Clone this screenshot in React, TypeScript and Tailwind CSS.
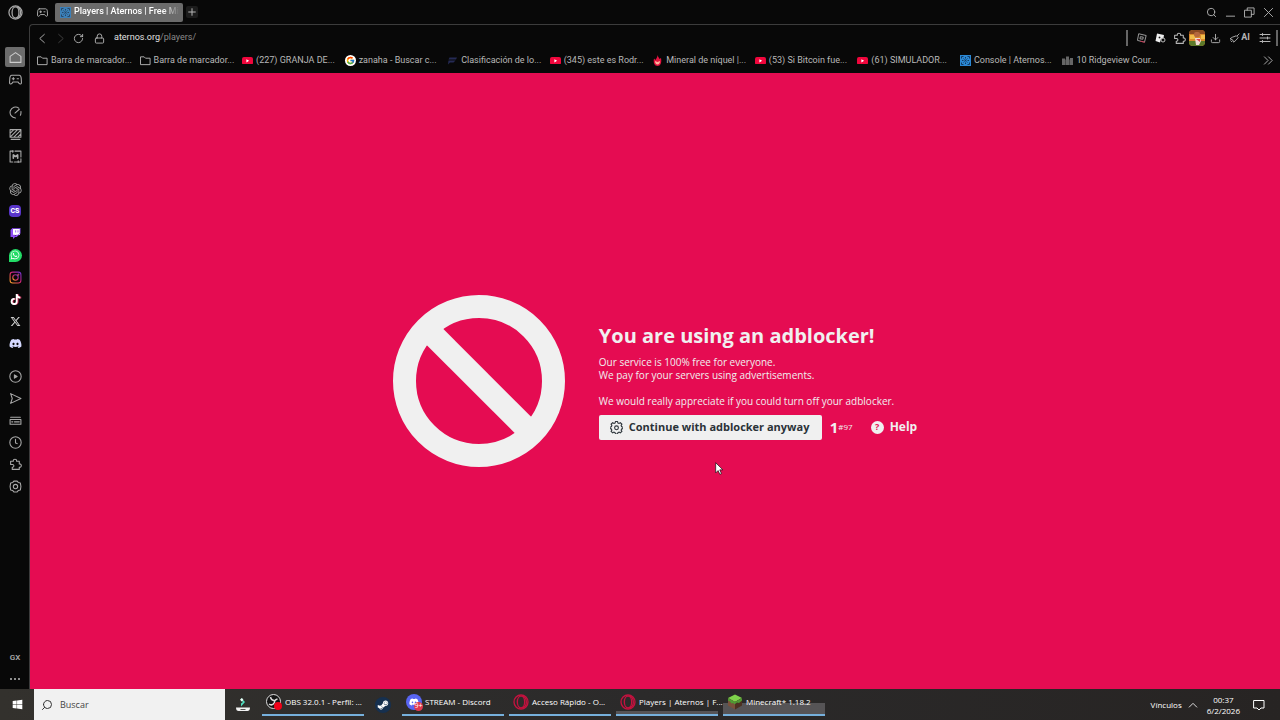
import type { ReactNode } from 'react'
import { Download, Lock, RotateCw, Search } from 'lucide-react'
import { FaDiscord, FaSteamSymbol, FaTiktok, FaTwitch, FaWhatsapp, FaWindows, FaXTwitter } from 'react-icons/fa6'
import { FcGoogle } from 'react-icons/fc'
import { RiOpenaiFill } from 'react-icons/ri'

interface IconProps {
  className?: string
  children: ReactNode
}

// Thin outlined 24x24 icon
function Line({ className = 'size-[13px]', children }: IconProps) {
  return (
    <svg
      viewBox="0 0 24 24"
      className={className}
      fill="none"
      stroke="currentColor"
      strokeWidth="2"
      strokeLinecap="round"
      strokeLinejoin="round"
      aria-hidden="true"
    >
      {children}
    </svg>
  )
}

function OperaIcon({ className }: { className?: string }) {
  return (
    <Line className={className}>
      <circle cx="12" cy="12" r="10.5" />
      <ellipse cx="12" cy="12" rx="5.5" ry="8.8" />
      <path d="M15 3.5c3 1 5 4.500 5 8.500s-2 7.500-5 8.500" />
    </Line>
  )
}

function GamepadIcon({ className }: { className?: string }) {
  return (
    <Line className={className}>
      <path d="M5 4h14c2 0 3 2 3.500 5l.5 9c0 2.500-3 3-4.500 1L16.500 16.500h-9L5.500 19C4 21 1 20.500 1 18l.5-9C2 6 3 4 5 4z" />
      <path d="M6 10.500h4M8 8.500v4M15 10.500h2.500" />
    </Line>
  )
}

function PuzzleIcon() {
  return (
    <Line>
      <path d="M3 6h5c-1-5 7-5 6 0h5v5c5-1 5 7 0 6v4H6v-4c4 1 4-6 0-5H3z" />
    </Line>
  )
}

function YoutubeIcon() {
  return (
    <svg viewBox="0 0 20 14" className="w-[11px] shrink-0" aria-hidden="true">
      <rect width="20" height="14" rx="3.5" fill="#f0063c" />
      <path d="M8 4v6l5-3z" fill="#fff" />
    </svg>
  )
}

function FolderIcon() {
  return (
    <Line className="size-[11px] shrink-0">
      <path d="M2 4h7l3 3h10v14H2z" />
    </Line>
  )
}

function AternosIcon({ className }: { className?: string }) {
  return (
    <svg viewBox="0 0 22 22" className={className} aria-hidden="true">
      <rect width="22" height="22" fill="#2b87d3" />
      <path
        d="M3 7V3h4M15 3h4v4M19 15v4h-4M7 19H3v-4M7 7l2 2M15 7l-2 2M7 15l2-2M15 15l-2-2M11 4v3M11 15v3M4 11h3M15 11h3"
        stroke="#123a63"
        strokeWidth="2"
        fill="none"
      />
      <rect x="9.500" y="9.500" width="3" height="3" fill="#123a63" />
    </svg>
  )
}

const bookmarks: { label: string; icon: ReactNode }[] = [
  { label: 'Barra de marcador...', icon: <FolderIcon /> },
  { label: 'Barra de marcador...', icon: <FolderIcon /> },
  { label: '(227) GRANJA DE...', icon: <YoutubeIcon /> },
  {
    label: 'zanaha - Buscar c...',
    icon: (
      <span className="flex size-[11px] shrink-0 items-center justify-center rounded-full bg-white">
        <FcGoogle className="size-[9px]" />
      </span>
    ),
  },
  {
    label: 'Clasificación de lo...',
    icon: (
      <svg viewBox="0 0 22 22" className="size-[11px] shrink-0" aria-hidden="true">
        <path d="M5 5h15l-2 4H3zM3 11h14l-4 4H6l-4 4z" fill="#252a55" />
      </svg>
    ),
  },
  { label: '(345) este es Rodr...', icon: <YoutubeIcon /> },
  {
    label: 'Mineral de níquel |...',
    icon: (
      <svg viewBox="0 0 22 22" className="size-[11px] shrink-0" aria-hidden="true">
        <path d="M11 0c1 4 3 5 4 8l3-2c2 9-1 16-7 16S2 15 4 7l3 3c1-3 4-5 4-10z" fill="#e3123f" />
        <path d="M6 12l5 2 5-2c0 4-2 7-5 7s-5-3-5-7z" fill="#ffb199" />
      </svg>
    ),
  },
  { label: '(53) Si Bitcoin fue...', icon: <YoutubeIcon /> },
  { label: '(61) SIMULADOR...', icon: <YoutubeIcon /> },
  { label: 'Console | Aternos...', icon: <AternosIcon className="size-[11px] shrink-0" /> },
  {
    label: '10 Ridgeview Cour...',
    icon: (
      <svg viewBox="0 0 22 18" className="w-[11px] shrink-0" aria-hidden="true">
        <path d="M0 5h6v13H0zM8 1h6v17H8zM16 4h6v14h-6z" fill="#666" />
        <path d="M6 7h2v11H6zM14 7h2v11h-2z" fill="#444" />
      </svg>
    ),
  },
]

const sidebarGroups: { name: string; icon: ReactNode }[][] = [
  [
    {
      name: 'Speed Dial',
      icon: (
        <span className="flex size-5 items-center justify-center rounded-xs bg-[#6c6c6c] text-[#ccc]">
          <Line>
            <path d="M2 10l10-7 10 7v11H2z" />
          </Line>
        </span>
      ),
    },
    { name: 'GX Corner', icon: <GamepadIcon className="size-[13px]" /> },
  ],
  [
    {
      name: 'GX Control',
      icon: (
        <Line>
          <path d="M12 22A10 10 0 1 1 18 4M22 10c.3 3 0 5-1 7M11 13l8-7" />
        </Line>
      ),
    },
    {
      name: 'Hot Tabs Killer',
      icon: (
        <Line>
          <path d="M2 3h20v14H2zM4 21h16M2 10l7-7M3 16L15 4M9 17L21 5M16 17l6-6" />
        </Line>
      ),
    },
    {
      name: 'GX Mods',
      icon: (
        <Line>
          <path d="M8 2H2v20h5M10 22h12v-6M22 13V2H11M7 1v3M17 20v3" />
          <path d="M8 15V9l4 3 4-3v6" strokeWidth="3" />
        </Line>
      ),
    },
  ],
  [
    { name: 'ChatGPT', icon: <RiOpenaiFill className="size-[15px]" /> },
    {
      name: 'CS',
      icon: (
        <span className="flex size-3 items-center justify-center rounded-sm bg-[#5935c9] text-[7px] font-black text-white">CS</span>
      ),
    },
    {
      name: 'Twitch',
      icon: (
        <span className="flex size-[11px] bg-[linear-gradient(white,white)] bg-[length:7px_6px] bg-[position:3px_1px] bg-no-repeat">
          <FaTwitch className="size-[11px] text-[#8d4df5]" />
        </span>
      ),
    },
    {
      name: 'WhatsApp',
      icon: (
        <span className="flex size-[13px] items-center justify-center rounded-full rounded-bl-xs bg-[#22dc66]">
          <FaWhatsapp className="size-[10px] text-white" />
        </span>
      ),
    },
    {
      name: 'Instagram',
      icon: (
        <svg viewBox="0 0 24 24" className="size-[13px]" fill="none" stroke="url(#ig)" strokeWidth="2" aria-hidden="true">
          <defs>
            <linearGradient id="ig" x1="0" y1="1" x2="1" y2="0">
              <stop offset="0" stopColor="#f5a623" />
              <stop offset="0.5" stopColor="#d6246e" />
              <stop offset="1" stopColor="#6a30d0" />
            </linearGradient>
          </defs>
          <rect x="2" y="2" width="20" height="20" rx="5" />
          <circle cx="12" cy="12" r="5" />
          <circle cx="17.500" cy="6.500" r="0.7" />
        </svg>
      ),
    },
    { name: 'TikTok', icon: <FaTiktok className="size-[11px] text-white drop-shadow-[1px_0_0_#b01c45]" /> },
    { name: 'X', icon: <FaXTwitter className="size-[11px] text-[#d0d0d0]" /> },
    { name: 'Discord', icon: <FaDiscord className="size-[13px] text-[#d5d9ff]" /> },
  ],
  [
    {
      name: 'Player',
      icon: (
        <Line>
          <circle cx="12" cy="12" r="10.5" />
          <path d="M10 9v6l5-3z" fill="currentColor" />
        </Line>
      ),
    },
    {
      name: 'My Flow',
      icon: (
        <Line>
          <path d="M3 3l19 9-19 9 3-9z" />
        </Line>
      ),
    },
    {
      name: 'Pinboards',
      icon: (
        <Line>
          <path d="M3 6h18M2 10h20v9H2zM5 14.500h2M10 14.500h9" />
        </Line>
      ),
    },
    {
      name: 'History',
      icon: (
        <Line>
          <circle cx="12" cy="12" r="10.5" />
          <path d="M12 6v7l3 1" />
        </Line>
      ),
    },
    { name: 'Extensions', icon: <PuzzleIcon /> },
    {
      name: 'Settings',
      icon: (
        <Line>
          <path d="M9 2h6l2 2.500 4 1 1 6.500-1 6.500-4 1L15 22H9l-2-2.500-4-1L2 12l1-6.500 4-1z" />
          <circle cx="12" cy="12" r="4" />
        </Line>
      ),
    },
  ],
]

function Sidebar() {
  return (
    <nav aria-label="Sidebar" className="flex w-[29px] shrink-0 flex-col bg-[#080808] pl-px text-[#a8a8a8]">
      <button aria-label="Opera menu" className="mb-[22px] flex h-6 items-center justify-center">
        <OperaIcon className="size-[15px]" />
      </button>
      <div className="flex flex-col gap-[11px]">
        {sidebarGroups.map((group, index) => (
          <div key={index} className="flex flex-col">
            {group.map((item) => (
              <button key={item.name} aria-label={item.name} className="flex h-[22px] items-center justify-center">
                {item.icon}
              </button>
            ))}
          </div>
        ))}
      </div>
      <div className="mt-auto flex flex-col">
        <button className="h-[22px] text-[8px] font-semibold">GX</button>
        <button aria-label="More" className="flex h-5 items-center justify-center gap-[2px]">
          <span className="size-[2px] rounded-full bg-[#bbb]" />
          <span className="size-[2px] rounded-full bg-[#bbb]" />
          <span className="size-[2px] rounded-full bg-[#bbb]" />
        </button>
      </div>
    </nav>
  )
}

function TabBar() {
  return (
    <header className="flex h-6 shrink-0 items-center pr-[6px] pl-2 text-[#b5b5b5]">
      <button aria-label="GX Corner">
        <GamepadIcon className="size-[11px]" />
      </button>
      <button className="ml-[7px] flex h-[19px] w-32 items-center gap-[3px] rounded-xs bg-[#6b6b6b] px-[5px] font-medium text-white">
        <AternosIcon className="size-[11px] shrink-0 opacity-75" />
        <span className="mask-r-from-85% whitespace-nowrap">Players | Aternos | Free Mi</span>
      </button>
      <button aria-label="New tab" className="ml-[3px] flex size-3 items-center justify-center rounded-xs bg-[#1c1c1c]">
        <Line className="size-[8px]">
          <path d="M12 2v20M2 12h20" strokeWidth="3" />
        </Line>
      </button>
      <div className="ml-auto flex items-center gap-2">
        <button aria-label="Search tabs">
          <Search className="size-[11px]" />
        </button>
        <button aria-label="Minimize">
          <Line className="size-[11px]">
            <path d="M3 20h18" />
          </Line>
        </button>
        <button aria-label="Restore">
          <Line className="size-[11px]">
            <path d="M2 7h14v15H2zM7 7V2h15v14h-6" />
          </Line>
        </button>
        <button aria-label="Close">
          <Line className="size-[11px]">
            <path d="M3 3l18 18M21 3L3 21" />
          </Line>
        </button>
      </div>
    </header>
  )
}

function AddressBar() {
  return (
    <div className="flex h-[26px] shrink-0 items-center pl-[7px] text-[#b5b5b5]">
      <button aria-label="Back">
        <Line className="size-[11px]">
          <path d="M16 3L6 12l10 9" />
        </Line>
      </button>
      <button aria-label="Forward" className="ml-[7px] text-[#444]" disabled>
        <Line className="size-[11px]">
          <path d="M8 3l10 9-10 9" />
        </Line>
      </button>
      <button aria-label="Reload" className="ml-[7px]">
        <RotateCw className="size-[11px]" />
      </button>
      <Lock className="ml-[10px] size-[11px]" />
      <a href="#" className="ml-[9px] text-[#8a8a8a]">
        <span className="text-[#e0e0e0]">aternos.org</span>/players/
      </a>
      <div className="ml-auto flex items-center">
        <span className="h-4 w-[2px] bg-[#666]" />
        <button aria-label="Roblox extension" className="ml-[9px]">
          <Line className="size-[10px]">
            <path d="M5 2l17 4-4 16L2 18z" />
            <path d="M9 9l6 1-1 5-6-1z" />
            <path d="M18 22L9 20" stroke="#d02848" />
          </Line>
        </button>
        <button aria-label="Roblox tools" className="ml-2">
          <svg viewBox="0 0 22 20" className="w-[11px]" aria-hidden="true">
            <path d="M4 1l14 3-1 6-5 2-2 7-9-3z" fill="#eee" />
            <path d="M8 7l3 1-1 3-3-1z" fill="#111" />
            <circle cx="16" cy="14" r="4" fill="none" stroke="#bbb" strokeWidth="2" />
          </svg>
        </button>
        <button aria-label="Extensions" className="ml-[7px]">
          <PuzzleIcon />
        </button>
        <button aria-label="Profile" className="ml-[3px] size-4 overflow-hidden rounded-sm">
          <svg viewBox="0 0 16 16" className="size-4" aria-hidden="true">
            <rect width="16" height="16" fill="#d98a2b" />
            <path d="M0 0h16v4H0z" fill="#8b4a22" />
            <path d="M0 11h16v5H0z" fill="#5d7a2a" />
            <path d="M1 5h5v4H1zM12 5h4v4h-4z" fill="#f0bd4c" />
            <rect x="5" y="2" width="6" height="5" rx="2" fill="#b5683e" />
            <path d="M6 8h5l1 3-2 4H7z" fill="#f1dcd5" />
            <path d="M7 9h4v3z" fill="#d8484d" />
          </svg>
        </button>
        <button aria-label="Downloads" className="ml-[5px]">
          <Download className="size-[11px]" />
        </button>
        <button className="ml-2 flex items-center gap-px font-bold">
          <Line className="size-[11px]">
            <path d="M8 9l8-3 4 4-5 6-5 4-2-5-5-2zM18 6l4-4M4 17l2 2" />
          </Line>
          AI
        </button>
        <button aria-label="Easy setup" className="ml-[9px]">
          <Line className="size-[12px]">
            <path d="M2 5h20M2 12h20M2 19h20M7 3v4M17 10v4M7 17v4" />
          </Line>
        </button>
        <span className="ml-[5px] h-4 w-[2px] bg-[#666]" />
        <span className="w-[2px]" />
      </div>
    </div>
  )
}

function BookmarksBar() {
  return (
    <div className="flex h-[22px] shrink-0 items-center pr-[6px] pb-[3px] pl-[7px] text-[#b8b8b8]">
      <div className="grid w-full max-w-[1128px] grid-cols-11">
        {bookmarks.map((bookmark, index) => (
          <a key={index} href="#" className="flex items-center gap-[3px] whitespace-nowrap">
            {bookmark.icon}
            {bookmark.label}
          </a>
        ))}
      </div>
      <button aria-label="More bookmarks" className="ml-auto">
        <Line className="size-[11px]">
          <path d="M3 4l8 8-8 8M12 4l8 8-8 8" />
        </Line>
      </button>
    </div>
  )
}

function AdblockPage() {
  return (
    <main className="relative flex flex-1 items-center justify-center gap-[34px] bg-[#e50c52] font-['Open_Sans',sans-serif] text-[#f0f0f0]">
      <svg viewBox="0 0 172 172" className="size-[172px]" fill="none" stroke="#f0f0f0" strokeWidth="23" aria-hidden="true">
        <circle cx="86" cy="86" r="74.5" />
        <path d="M36 36l100 100" />
      </svg>
      <div>
        <h1 className="text-[20px] leading-[26px] font-bold">You are using an adblocker!</h1>
        <p className="mt-[7px] text-[10px] leading-[13px] font-medium">
          Our service is 100% free for everyone.
          <br />
          We pay for your servers using advertisements.
          <br />
          <br />
          We would really appreciate if you could turn off your adblocker.
        </p>
        <div className="mt-[7px] flex h-[25px] items-center text-[12px] font-bold">
          <button className="flex h-[25px] w-[223px] items-center gap-[6px] rounded-xs bg-[#f0f0f0] pl-[11px] text-[11px] whitespace-nowrap text-[#2b3238]">
            <Line className="size-[13px] shrink-0">
              <path d="M9.500 3.500L10 1h4l.5 2.500 2.500 1 2-1.500 3 3-1.500 2 1 2.500L24 11v3l-2.500.5-1 2.500 1.500 2-3 3-2-1.500-2.500 1L14 24h-4l-.5-2.500-2.500-1L5 22l-3-3 1.500-2-1-2.500L0 14v-3l2.500-.5 1-2.500L2 6l3-3 2 1.500z" />
              <circle cx="12" cy="12.5" r="3.5" />
            </Line>
            Continue with adblocker anyway
          </button>
          <span className="ml-2 text-[15px]">1</span>
          <span className="text-[8px] font-medium">#97</span>
          <a href="#" className="ml-[18px] flex items-center gap-[6px]">
            <span className="flex size-[13px] items-center justify-center rounded-full bg-[#f0f0f0] text-[9px] text-[#e50c52]">?</span>
            Help
          </a>
        </div>
      </div>
      {/* Mouse pointer */}
      <svg viewBox="0 0 12 19" className="absolute top-[389px] left-[685px] h-[13px]" aria-hidden="true">
        <path d="M1 1v15l3.500-3.500L7 18l2.500-1-2.500-5.500h4.500z" fill="#fff" stroke="#111" />
      </svg>
    </main>
  )
}

const tasks: { label?: string; icon: ReactNode; name: string; tone?: string }[] = [
  {
    name: 'Filmora',
    icon: (
      <svg viewBox="0 0 32 32" className="size-4" aria-hidden="true">
        <path d="M12 2l8 8-8 9v-6l4-3-4-3z" fill="#4de0c0" />
        <path d="M10 5l4-3 3 4-4 3z" fill="#e8fff8" />
        <path d="M2 21h28c0 5-2 7-5 7H7c-3 0-5-2-5-7z" fill="#f2f2f2" />
        <path d="M11 24h10v2H11z" fill="#555" />
      </svg>
    ),
  },
  {
    name: 'OBS',
    label: 'OBS 32.0.1 - Perfil: ...',
    icon: (
      <svg viewBox="0 0 32 32" className="size-4 shrink-0" aria-hidden="true">
        <circle cx="15" cy="15" r="14" fill="#151515" stroke="#ddd" strokeWidth="2" />
        <path d="M9 6c1 5 4 7 8 7M23 10c-5 1-7 5-6 9M6 20c4 3 8 2 10-2" stroke="#ddd" strokeWidth="3" fill="none" />
        <circle cx="24" cy="24" r="8" fill="#f00018" />
      </svg>
    ),
  },
  {
    name: 'Steam',
    icon: (
      <span className="flex size-4 items-center justify-center rounded-full bg-[#16304f]">
        <FaSteamSymbol className="size-3 text-white" />
      </span>
    ),
  },
  {
    name: 'Discord',
    label: 'STREAM - Discord',
    icon: (
      <span className="relative flex size-4 shrink-0 items-center justify-center rounded-full bg-[#5865f2]">
        <FaDiscord className="size-[10px] text-white" />
        <span className="absolute top-2 left-2 flex h-[9px] w-[9px] items-center justify-center rounded-full bg-[#e0384e] text-[7px]">9+</span>
      </span>
    ),
  },
  { name: 'Opera speed dial', label: 'Acceso Rápido - O...', icon: <OperaIcon className="size-4 shrink-0 text-[#c4123f]" /> },
  {
    name: 'Opera players',
    label: 'Players | Aternos | F...',
    icon: <OperaIcon className="size-4 shrink-0 text-[#c4123f]" />,
    tone: 'bg-linear-to-b from-transparent from-90% to-[#565456] to-90%',
  },
  {
    name: 'Minecraft',
    label: 'Minecraft* 1.18.2',
    icon: (
      <svg viewBox="0 0 32 32" className="size-4 shrink-0" aria-hidden="true">
        <path d="M16 1l14 7-14 8L2 8z" fill="#7fd34b" />
        <path d="M2 8l14 8v15L2 23z" fill="#79503a" />
        <path d="M30 8l-14 8v15l14-8z" fill="#4d3022" />
        <path d="M2 8l14 8v5l-4-3-3 1-3-4-4-2zM30 8l-14 8v4l4-3 4 1 6-5z" fill="#4f9a33" />
      </svg>
    ),
    tone: 'bg-linear-to-b from-transparent from-55% to-[#565456] to-55%',
  },
]

function Taskbar() {
  return (
    <footer className="flex h-[31px] shrink-0 items-center bg-linear-to-r from-[#33312d] via-[#2b2a2a] to-[#272423] font-['Open_Sans',sans-serif] text-[8px] font-medium text-white">
      <button aria-label="Start" className="flex h-full w-[34px] items-center justify-center">
        <FaWindows className="size-[11px]" />
      </button>
      <label className="flex h-full w-[191px] items-center gap-[7px] bg-[#f1f1f1] pl-[7px] text-[#333]">
        <Search className="size-3 shrink-0 -scale-x-100" strokeWidth={2} />
        <input
          aria-label="Buscar"
          placeholder="Buscar"
          className="w-full min-w-0 bg-transparent text-[9px] outline-none placeholder:text-[#444]"
        />
      </label>
      <div className="flex h-full items-center gap-[5px]">
        {tasks.map((task) =>
          task.label ? (
            <button
              key={task.name}
              className={`flex h-[27px] w-[102px] items-center gap-[3px] self-start border-b-2 border-[#76b0dc] pt-px pl-1 whitespace-nowrap ${task.tone ?? ''}`}
            >
              {task.icon}
              {task.label}
            </button>
          ) : (
            <button key={task.name} aria-label={task.name} className="flex w-7 items-center justify-center first:ml-1">
              {task.icon}
            </button>
          )
        )}
      </div>
      <div className="ml-auto flex items-center pr-[15px]">
        <span>Vínculos</span>
        <button aria-label="Show hidden icons" className="ml-[6px]">
          <Line className="size-[10px]">
            <path d="M3 17l9-9 9 9" />
          </Line>
        </button>
        <time className="ml-[9px] text-center leading-[11px]">
          00:37
          <br />
          6/2/2026
        </time>
        <button aria-label="Notifications" className="ml-[13px]">
          <Line className="size-3">
            <path d="M2 3h20v15h-6l-4 4-4-4H2z" />
          </Line>
        </button>
      </div>
    </footer>
  )
}

export default function App() {
  return (
    <div className="flex h-screen flex-col bg-[#080808] font-[Roboto,sans-serif] text-[9px]">
      <div className="flex min-h-0 flex-1">
        <Sidebar />
        <div className="flex min-w-0 flex-1 flex-col">
          <TabBar />
          <div className="flex flex-1 flex-col overflow-hidden rounded-tl-sm border-t border-l border-[#3c3c3c]">
            <AddressBar />
            <BookmarksBar />
            <AdblockPage />
          </div>
        </div>
      </div>
      <Taskbar />
    </div>
  )
}
